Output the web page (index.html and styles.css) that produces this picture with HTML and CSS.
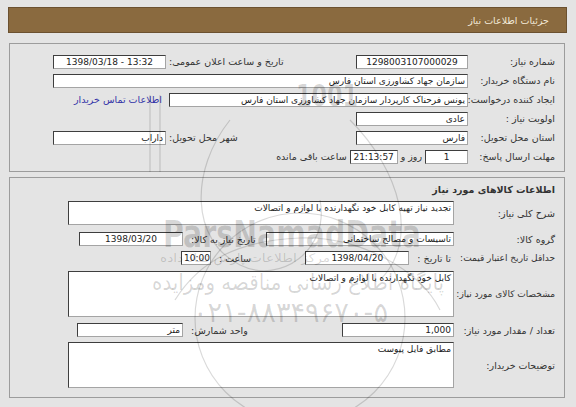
FILE: index.html
```html
<!DOCTYPE html>
<html lang="fa" dir="rtl">
<head>
<meta charset="utf-8">
<title>جزئیات اطلاعات نیاز</title>
<link rel="stylesheet" href="styles.css">
</head>
<body>
<div class="page">
  <div class="header">جزئیات اطلاعات نیاز</div>

  <div class="box box1">
    <div class="row">
      <div class="lbl">شماره نیاز:</div>
      <div class="fld w112 center">1298003107000029</div>
      <div class="spacer"></div>
      <div class="lbl2">تاریخ و ساعت اعلان عمومی:</div>
      <div class="fld w113 center ltr">1398/03/18 - 13:32</div>
    </div>
    <div class="row">
      <div class="lbl">نام دستگاه خریدار:</div>
      <div class="fld grow">سازمان جهاد کشاورزی استان فارس</div>
    </div>
    <div class="row">
      <div class="lbl">ایجاد کننده درخواست:</div>
      <div class="fld w299">یونس  فرحناک کارپردار سازمان جهاد کشاورزی استان فارس</div>
      <a class="link" href="#">اطلاعات تماس خریدار</a>
    </div>
    <div class="row">
      <div class="lbl">اولویت نیاز :</div>
      <div class="fld w112">عادی</div>
    </div>
    <div class="row">
      <div class="lbl">استان محل تحویل:</div>
      <div class="fld w112">فارس</div>
      <div class="spacer"></div>
      <div class="lbl2">شهر محل تحویل:</div>
      <div class="fld w113">داراب</div>
    </div>
    <div class="row">
      <div class="lbl">مهلت ارسال پاسخ:</div>
      <div class="fld w43 center">1</div>
      <div class="txt">روز و</div>
      <div class="fld w48 center ltr">21:13:57</div>
      <div class="txt">ساعت باقی مانده</div>
    </div>
  </div>

  <div class="box box2">
    <div class="title">اطلاعات کالاهای مورد نیاز</div>
    <div class="row2 r-desc">
      <div class="lbl2c">شرح کلی نیاز:</div>
      <div class="fld area24 grow">تجدید نیاز تهیه کابل خود نگهدارنده با لوازم و اتصالات</div>
    </div>
    <div class="row2 r-group">
      <div class="lbl2c">گروه کالا:</div>
      <div class="fld w188">تاسیسات و مصالح ساختمانی</div>
      <div class="spacer"></div>
      <div class="sublbl">تاریخ نیاز به کالا:</div>
      <div class="fld w104 center ltr">1398/03/20</div>
      <div class="tail-a"></div>
    </div>
    <div class="row2 r-valid">
      <div class="lbl2c tight">حداقل تاریخ اعتبار قیمت:</div>
      <div class="sublbl">تا تاریخ :</div>
      <div class="fld w104 center ltr">1398/04/20</div>
      <div class="spacer"></div>
      <div class="sublbl">ساعت :</div>
      <div class="fld w30 center ltr">10:00</div>
      <div class="tail-b"></div>
    </div>
    <div class="row2 r-spec">
      <div class="lbl2c tight">مشخصات کالای مورد نیاز:</div>
      <div class="fld area46 grow">کابل خود نگهدارنده با لوازم و اتصالات</div>
    </div>
    <div class="row2 r-qty">
      <div class="lbl2c">تعداد / مقدار مورد نیاز:</div>
      <div class="fld w112 num">1,000</div>
      <div class="spacer"></div>
      <div class="sublbl">واحد شمارش:</div>
      <div class="fld w106">متر</div>
      <div class="tail-c"></div>
    </div>
    <div class="row2 r-note">
      <div class="lbl2c">توضیحات خریدار:</div>
      <div class="fld area46 grow">مطابق فایل پیوست</div>
    </div>
  </div>

  <div class="watermark" aria-hidden="true">
    <svg width="576" height="407" viewBox="0 0 576 407">
      <g fill="none" stroke="#000" stroke-opacity="0.15" stroke-width="1.2">
        <circle cx="300" cy="318" r="105"/>
        <path d="M150 95 L150 172 M160 95 L160 172"/>
        <path d="M230 120 C190 170 190 240 240 265 C280 285 330 250 320 200"/>
        <path d="M350 120 C400 170 420 240 380 280"/>
        <path d="M175 300 C200 260 240 240 300 238 C360 236 420 270 440 310"/>
      </g>
      <g fill="#000" fill-opacity="0.16" font-family="DejaVu Sans, sans-serif">
        <text x="296" y="106" font-size="30" font-weight="bold" textLength="62" lengthAdjust="spacingAndGlyphs">1001</text>
        <text x="163" y="247" font-size="38" font-weight="bold" textLength="258" lengthAdjust="spacingAndGlyphs">ParsNamadData</text>
        <text x="160" y="262" font-size="12" textLength="170" lengthAdjust="spacingAndGlyphs">مرکز اطلاعات پارس نماد داده</text>
        <text x="152" y="290" font-size="22" textLength="292" lengthAdjust="spacingAndGlyphs">پایگاه اطلاع رسانی مناقصه ومزایده</text>
        <text x="193" y="322" font-size="28" textLength="195" lengthAdjust="spacingAndGlyphs">۰۲۱-۸۸۳۴۹۶۷۰-۵</text>
      </g>
    </svg>
  </div>
</div>
</body>
</html>
```

FILE: styles.css
```css
* { box-sizing: border-box; }

html, body {
  margin: 0;
  padding: 0;
  background: #e4e4e4;
}

body {
  font-family: "DejaVu Sans", sans-serif;
  font-size: 9.5px;
  color: #333;
  direction: rtl;
}

.page {
  position: relative;
  width: 576px;
  height: 407px;
  padding: 7px 9px 0 8px;
  overflow: hidden;
}

.header {
  height: 26px;
  line-height: 25px;
  background: #8a6a3f;
  border: 1px solid #6b5130;
  color: #f2e9d8;
  padding-right: 17px;
  font-size: 9.5px;
}

.box {
  border: 1px solid #9c9c9c;
  margin: 0 2px 0 1px;
}

.box1 {
  margin-top: 10px;
  padding: 8px 9px 5px 43px;
}

.box2 {
  margin-top: 5px;
  padding: 3px 9px 9px 58px;
}

.row {
  display: flex;
  align-items: center;
  height: 19px;
}

.lbl {
  width: 87px;
  flex: none;
  white-space: nowrap;
}

.lbl2 {
  white-space: nowrap;
  margin-left: 3px;
}

.txt {
  white-space: nowrap;
  margin: 0 3px;
}

.spacer { flex: 1; }

.fld {
  height: 14px;
  line-height: 12px;
  background: #fff;
  border: 1px solid;
  border-color: #3e3e3e #a4a4a4 #a4a4a4 #3e3e3e;
  padding: 0 2px;
  color: #222;
  font-size: 9px;
  white-space: nowrap;
  overflow: hidden;
  flex: none;
}

.fld.grow { flex: 1; }

.center { text-align: center; }

.ltr { direction: ltr; }

.num { direction: ltr; text-align: right; }

.w30 { width: 30px; }
.w43 { width: 43px; }
.w48 { width: 48px; }
.w104 { width: 104px; }
.w106 { width: 106px; }
.w112 { width: 112px; }
.w113 { width: 113px; }
.w188 { width: 188px; }
.w299 { width: 299px; }

.link {
  color: #3535a8;
  text-decoration: none;
  margin-right: 7px;
  white-space: nowrap;
}

.title {
  height: 18px;
  line-height: 18px;
  font-weight: bold;
  color: #333;
}

.row2 {
  display: flex;
  align-items: center;
}

.lbl2c {
  width: 101px;
  flex: none;
  white-space: nowrap;
}

.tight { font-size: 9px; }

.sublbl {
  flex: none;
  white-space: nowrap;
  margin: 0 3px 0 8px;
}

.tail-a { width: 11px; flex: none; }
.tail-b { width: 113px; flex: none; }
.tail-c { width: 9px; flex: none; }

.area24 {
  height: 24px;
  white-space: normal;
}

.area46 {
  height: 46px;
  white-space: normal;
}

.r-desc { margin-top: 2px; }
.r-group { margin-top: 7px; }
.r-valid { margin-top: 5px; }
.r-spec { margin-top: 6px; }
.r-qty { margin-top: 6px; }
.r-note { margin-top: 5px; }

.watermark {
  position: absolute;
  left: 0;
  top: 0;
  width: 576px;
  height: 407px;
  pointer-events: none;
}

.watermark svg {
  display: block;
  direction: ltr;
}
```
